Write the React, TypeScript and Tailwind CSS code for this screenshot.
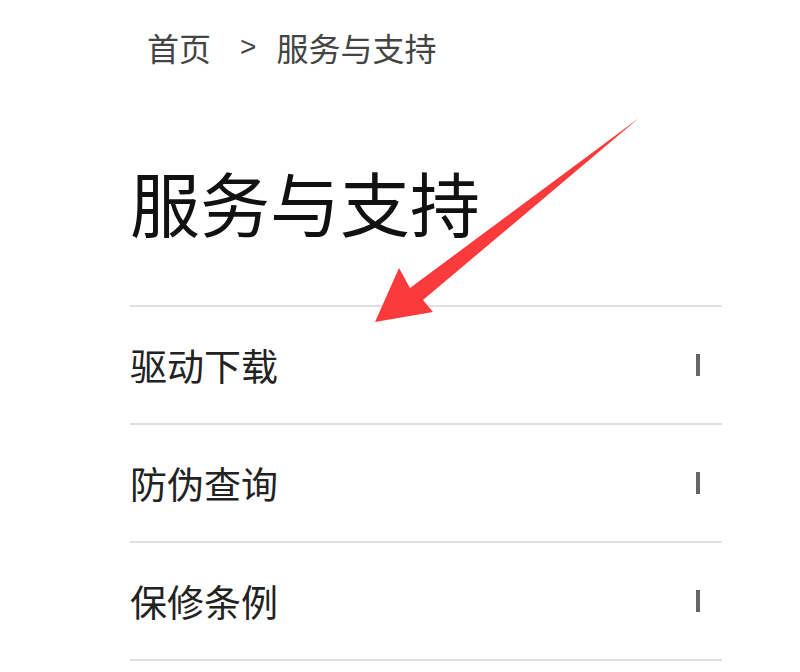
import React from "react";

const items = ["驱动下载", "防伪查询", "保修条例"];

const font = { fontFamily: '"Noto Sans CJK SC", "Liberation Sans", sans-serif' };

export default function App() {
  return (
    <div className="relative h-[672px] w-[800px] overflow-hidden bg-white" style={font}>
      <div className="ml-[130px] w-[592px]">
        {/* breadcrumb */}
        <div className="flex items-center pl-[17px] pt-[27px] text-[32px] leading-[40px] text-[#444]">
          <span>首页</span>
          <span className="ml-[29px] mr-[20px] text-[28px]" style={{ fontFamily: '"Liberation Sans", sans-serif' }}>
            &gt;
          </span>
          <span>服务与支持</span>
        </div>

        <h1 className="mt-[100px] text-[70px] font-normal leading-none text-[#111]">服务与支持</h1>

        <ul className="mt-[68px] border-t-2 border-[#e0e0e0]">
          {items.map((label) => (
            <li
              key={label}
              className="flex h-[118px] items-center justify-between border-b-2 border-[#e0e0e0]"
            >
              <span className="text-[37px] leading-none text-[#222]">{label}</span>
              <span className="mr-[22px] h-[22px] w-[4px] bg-[#666]" />
            </li>
          ))}
        </ul>
      </div>

      {/* annotation arrow */}
      <svg className="absolute left-0 top-0" width="800" height="672" viewBox="0 0 800 672">
        <polygon
          points="639,118 423,300 433,312 375,322 399,268 410,288"
          fill="#fb3b3b"
        />
      </svg>
    </div>
  );
}
